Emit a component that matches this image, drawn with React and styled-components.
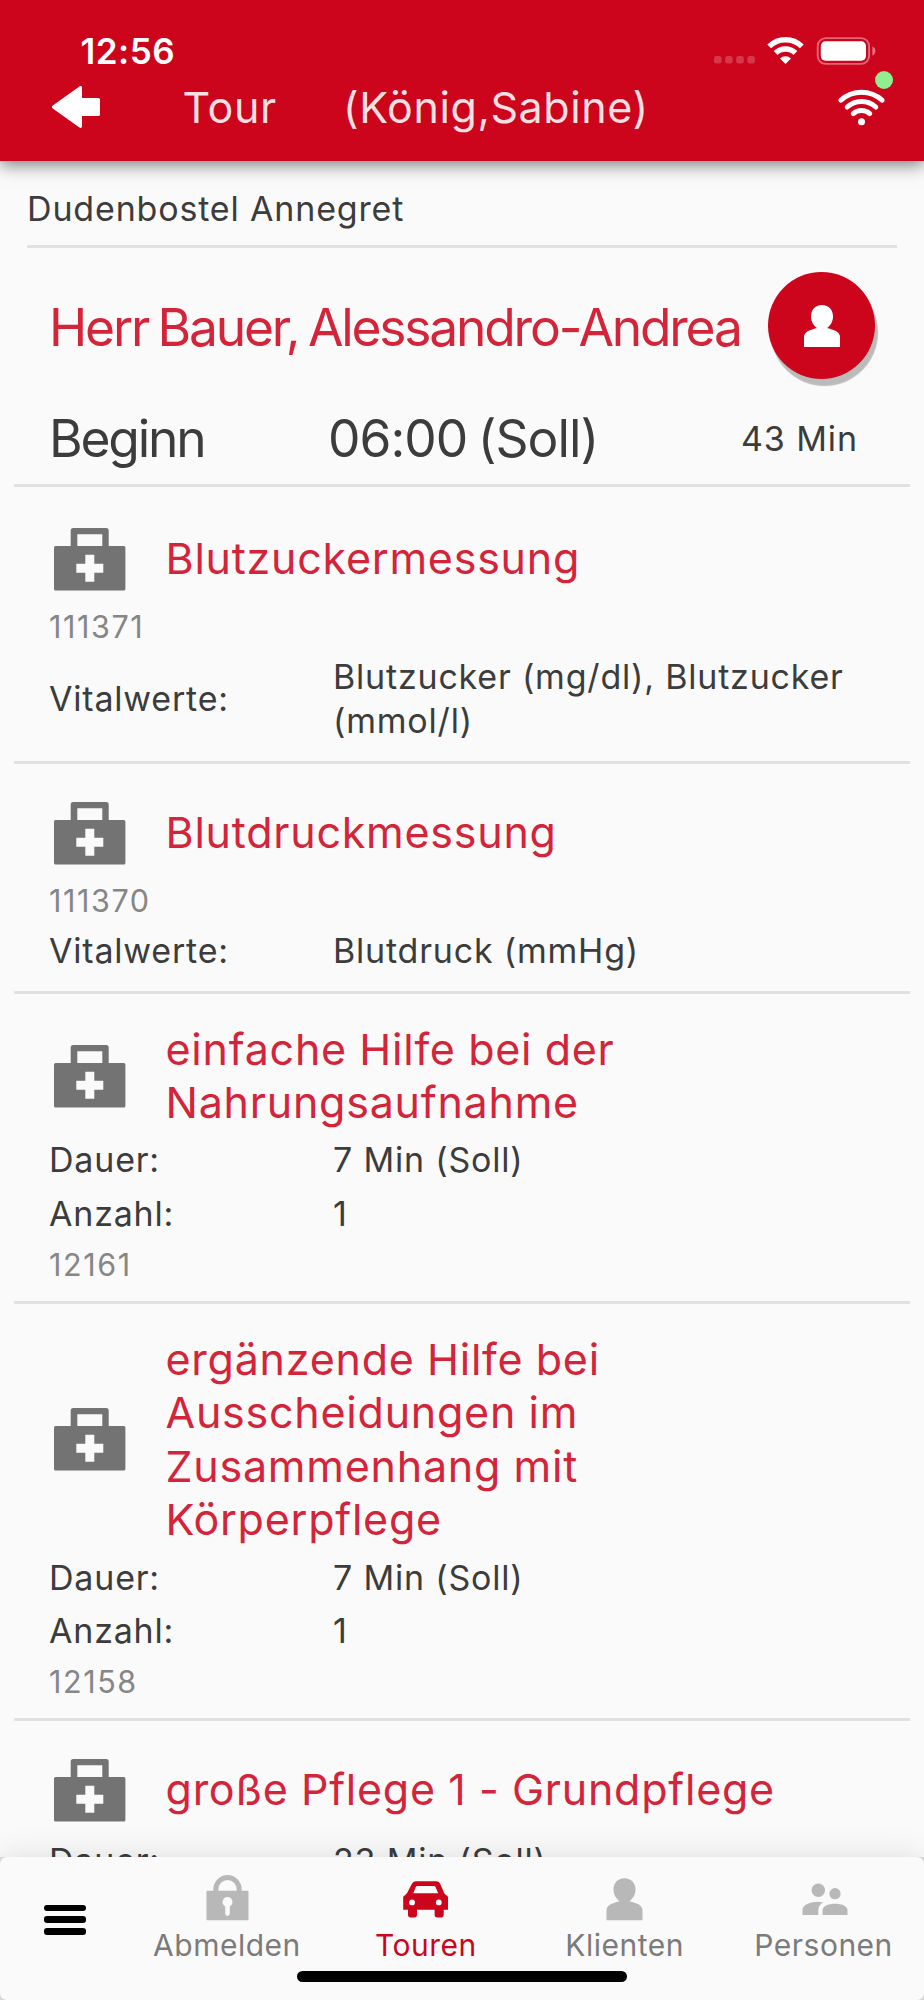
import React from 'react';
import styled, { createGlobalStyle, ThemeProvider } from 'styled-components';

const theme = {
  colors: {
    primary: '#cc051d',
    title: '#d42439',
    background: '#fafafa',
    text: '#3c3c3c',
    muted: '#868686',
    tabLabel: '#7b7b7b',
    tabIcon: '#b8b8b8',
    icon: '#737373',
    divider: '#e1e1e1',
    online: '#90ee90'
  },
  fontSizes: {
    sm: '30px',
    md: '34px',
    lg: '43px',
    xl: '51.5px'
  }
};

const GlobalStyle = createGlobalStyle`
  * {
    box-sizing: border-box;
  }

  body {
    margin: 0;
    background-color: #dedede;
    font-family: Inter, "Liberation Sans", sans-serif;
  }
`;

const Screen = styled.div`
  display: flex;
  flex-direction: column;
  width: 924px;
  height: 2000px;
  overflow: hidden;
  color: ${({ theme }) => theme.colors.text};
`;

const Header = styled.header`
  position: relative;
  z-index: 1;
  flex: none;
  height: 161px;
  background-color: ${({ theme }) => theme.colors.primary};
  box-shadow: 0 4px 16px rgba(0, 0, 0, 0.5);
  color: #fff;
`;

const StatusBar = styled.div`
  display: flex;
  align-items: center;
  height: 77px;
  padding: 24px 48px 0 80.5px;
`;

const Clock = styled.span`
  flex: 1;
  font-size: 35px;
  font-weight: 600;
  letter-spacing: 0.5px;
  line-height: 42px;
`;

const StatusIcons = styled.div`
  display: flex;
  align-items: center;
  gap: 12px;

  svg {
    display: block;
  }
`;

const AppBar = styled.div`
  display: grid;
  grid-template-columns: 130.5px 160.5px 1fr 48px;
  align-items: center;
  height: 59px;
  padding: 0 38.5px 0 52px;

  svg {
    display: block;
  }
`;

const BarTitle = styled.span`
  color: rgba(255, 255, 255, 0.88);
  font-size: ${({ theme }) => theme.fontSizes.lg};
  letter-spacing: 0.6px;
  line-height: 54px;
  white-space: nowrap;
`;

const Connection = styled.div`
  position: relative;
  width: 47px;
  margin-top: 2px;
`;

const OnlineBadge = styled.span`
  position: absolute;
  top: -18px;
  right: -8px;
  width: 18px;
  height: 18px;
  border-radius: 50%;
  background-color: ${({ theme }) => theme.colors.online};
`;

const Content = styled.main`
  flex: 1;
  min-height: 0;
  overflow: hidden;
  background-color: ${({ theme }) => theme.colors.background};
`;

const Caregiver = styled.div`
  height: 87px;
  margin: 0 27px;
  padding-top: 26px;
  border-bottom: 3px solid ${({ theme }) => theme.colors.divider};
  font-size: ${({ theme }) => theme.fontSizes.md};
  letter-spacing: 0.84px;
  line-height: 44px;
`;

const Client = styled.section`
  height: 239px;
  margin: 0 14px;
  padding: 24px 35px 0;
  border-bottom: 3px solid ${({ theme }) => theme.colors.divider};
`;

const ClientRow = styled.div`
  display: flex;
  align-items: center;
  justify-content: space-between;
  height: 107px;
`;

const ClientName = styled.h1`
  margin: 3px 0 0;
  color: ${({ theme }) => theme.colors.title};
  font-size: ${({ theme }) => theme.fontSizes.xl};
  font-weight: 400;
  letter-spacing: -2.2px;
  word-spacing: -2.8px;
  white-space: nowrap;
`;

const Avatar = styled.button`
  display: flex;
  flex: none;
  align-items: center;
  justify-content: center;
  width: 107px;
  height: 107px;
  padding: 0;
  border: 0;
  border-radius: 50%;
  background-color: ${({ theme }) => theme.colors.primary};
  box-shadow: 3px 7px 1px rgba(0, 0, 0, 0.25);
  color: #fff;
`;

const StartRow = styled.div`
  display: grid;
  grid-template-columns: 279px 413px 1fr;
  align-items: center;
  height: 90px;
  margin-top: 14px;
  white-space: nowrap;
`;

const StartText = styled.span`
  font-size: ${({ theme }) => theme.fontSizes.xl};
  letter-spacing: ${({ $tight }) => ($tight ? '-2.2px' : '-1px')};
  word-spacing: -3px;
`;

const Duration = styled.span`
  font-size: ${({ theme }) => theme.fontSizes.md};
  letter-spacing: 0.9px;
`;

const ServiceList = styled.div`
  padding-top: 3px;
`;

const Service = styled.article`
  margin: 0 14px;
  padding: 29px 35px 13px;
  border-bottom: 3px solid ${({ theme }) => theme.colors.divider};
`;

const ServiceHead = styled.div`
  display: grid;
  grid-template-columns: 112px 640px;
  align-items: center;
  min-height: 80px;
  margin-bottom: 4px;
  padding-left: 4.5px;

  svg {
    display: block;
  }
`;

const ServiceTitle = styled.h2`
  margin: 0;
  color: ${({ theme }) => theme.colors.title};
  font-size: ${({ theme }) => theme.fontSizes.lg};
  font-weight: 400;
  letter-spacing: 0.76px;
  word-spacing: -0.4px;
  line-height: 53.6px;
`;

const ServiceRow = styled.div`
  display: grid;
  grid-template-columns: 284px 1fr;
  align-items: center;
  padding: 4.5px 0;
  font-size: ${({ theme }) => theme.fontSizes.md};
  letter-spacing: 0.8px;
  line-height: 44.5px;
`;

const ServiceNumber = styled.div`
  padding: 4px 0 3px;
  color: ${({ theme }) => theme.colors.muted};
  font-size: 30.5px;
  letter-spacing: 1.6px;
  line-height: 40px;
`;

const TabBar = styled.nav`
  position: relative;
  z-index: 1;
  display: flex;
  flex: none;
  height: 143px;
  padding-right: 1px;
  border-radius: 7px;
  background-color: ${({ theme }) => theme.colors.background};
  box-shadow: 0 0 32px rgba(0, 0, 0, 0.12);
`;

const MenuButton = styled.button`
  display: flex;
  flex: none;
  flex-direction: column;
  gap: 5.5px;
  width: 127.5px;
  padding: 47.5px 0 0 44px;
  border: 0;
  background: none;
`;

const MenuLine = styled.span`
  width: 42px;
  height: 6.4px;
  border-radius: 3px;
  background-color: #000;
`;

const Tab = styled.a`
  display: flex;
  flex: 1;
  flex-direction: column;
  align-items: center;
  gap: 4px;
  padding-top: 18px;
  color: ${({ theme, $active }) => ($active ? theme.colors.primary : theme.colors.tabIcon)};
`;

const TabLabel = styled.span`
  color: ${({ theme, $active }) => ($active ? theme.colors.primary : theme.colors.tabLabel)};
  font-size: ${({ theme }) => theme.fontSizes.sm};
  letter-spacing: 0.5px;
  line-height: 36px;
`;

const HomeIndicator = styled.div`
  position: absolute;
  bottom: 18px;
  left: 297px;
  width: 330px;
  height: 11px;
  border-radius: 6px;
  background-color: #000;
`;

const SignalIcon = () => (
  <svg width="41" height="28" viewBox="0 0 41 28" fill="#fff" fillOpacity="0.2">
    {[0, 11.1, 22.2, 33.3].map((x) => (
      <rect key={x} x={x} y="19" width="7.6" height="7.6" rx="2.4" />
    ))}
  </svg>
);

const StatusWifiIcon = () => (
  <svg width="37" height="28" viewBox="0 0 37 28" fill="none" stroke="#fff" strokeWidth="5.4">
    <path d="M2.2 9.4a23.3 23.3 0 0 1 32.6 0" />
    <path d="M8.6 16a14.2 14.2 0 0 1 19.8 0" />
    <path d="M18.5 27l-5.5-5.6a7.8 7.8 0 0 1 11 0z" fill="#fff" stroke="none" />
  </svg>
);

const BatteryIcon = () => (
  <svg width="60" height="28" viewBox="0 0 60 28">
    <rect x="1.7" y="1.1" width="51.4" height="25.8" rx="8" fill="none" stroke="#fff" strokeOpacity="0.4" strokeWidth="1.9" />
    <rect x="4.8" y="4.3" width="45.2" height="19.4" rx="4.6" fill="#fff" />
    <path d="M56.4 9.4c4 1.2 4 8 0 9.2z" fill="#fff" fillOpacity="0.45" />
  </svg>
);

const BackIcon = () => (
  <svg width="48" height="42" viewBox="0 0 48 42" fill="#fff">
    <path d="M.8 19.4 27.4.6c1.3-1 2.6-.4 2.6 1.2V12h16.4q1.6 0 1.6 1.6v14.8q0 1.6-1.6 1.6H30v10.2c0 1.6-1.3 2.2-2.6 1.2L.8 22.6c-1.2-.9-1.2-2.3 0-3.2z" />
  </svg>
);

const WifiIcon = () => (
  <svg width="47" height="37" viewBox="0 0 47 37" fill="none" stroke="#fff" strokeWidth="5" strokeLinecap="round">
    <path d="M3 11.2a30.5 30.5 0 0 1 41 0" />
    <path d="M9.2 18a21.2 21.2 0 0 1 28.6 0" />
    <path d="M15.3 24.6a12.3 12.3 0 0 1 16.4 0" />
    <circle cx="23.5" cy="32.8" r="3.5" fill="#fff" stroke="none" />
  </svg>
);

const PERSON_PATH =
  'M18 0C25 0 29 5 29 11.4c0 5.2-2.8 9.4-6 11.6C31.5 25 36 27.6 36 32v10H0V32c0-4.4 4.5-7 13-9-3.2-2.2-6-6.4-6-11.6C7 5 11 0 18 0z';

const AvatarIcon = () => (
  <svg width="36" height="42" viewBox="0 0 36 42" fill="currentColor">
    <path d={PERSON_PATH} />
  </svg>
);

const MedicalCaseIcon = () => (
  <svg width="72" height="63" viewBox="0 0 72 63">
    <path
      fill={theme.colors.icon}
      fillRule="evenodd"
      d="M16.7 18V2.5q0-2.5 2.5-2.5h33q2.5 0 2.5 2.5V18h15.1q1.6 0 1.6 1.6v41.3q0 1.6-1.6 1.6H1.6q-1.6 0-1.6-1.6V19.6Q0 18 1.6 18zM23.3 6.3V18h25V6.3zM31.3 26.7v9h-9v9h9v9h9v-9h9v-9h-9v-9z"
    />
  </svg>
);

const LockIcon = () => (
  <svg width="48" height="48" viewBox="0 0 48 48" fill="currentColor">
    <path d="M12.8 17v-2.5a11.7 12 0 0 1 23.4 0V17" fill="none" stroke="currentColor" strokeWidth="5" />
    <path
      fillRule="evenodd"
      d="M4.5 15.7h40q1 0 1 1v27.5q0 1-1 1h-40q-1 0-1-1V16.7q0-1 1-1zM24.5 22a5 5 0 0 0-2.3 9.4v7.2a2.3 2.3 0 0 0 4.6 0v-7.2A5 5 0 0 0 24.5 22z"
    />
  </svg>
);

const CarIcon = () => (
  <svg width="48" height="48" viewBox="0 0 48 48" fill="currentColor">
    <path
      fillRule="evenodd"
      d="M14 6.3h20.2q3 0 4.2 2.9l4 9.3 3.6 3.2v13.1h-4.3v5q0 2.7-2.7 2.7h-3.7q-2.7 0-2.7-2.7v-5H15v5q0 2.7-2.7 2.7H8.6q-2.6 0-2.6-2.7v-5H1.2V21.7l3.6-3.2 4.9-9.3Q11 6.3 14 6.3zM15.6 11q-1.4 0-1.9 1.3l-2.4 6h24.8l-2.4-6q-.5-1.3-1.9-1.3zM10.1 24.5a2.9 2.9 0 1 0 0 5.8 2.9 2.9 0 0 0 0-5.8zM36.8 24.5a2.9 2.9 0 1 0 0 5.8 2.9 2.9 0 0 0 0-5.8z"
    />
  </svg>
);

const PersonIcon = () => (
  <svg width="48" height="48" viewBox="0 0 48 48" fill="currentColor">
    <path transform="translate(5.5 3.2)" d={PERSON_PATH} />
  </svg>
);

const PeopleIcon = () => (
  <svg width="48" height="48" viewBox="0 0 48 48" fill="currentColor">
    <circle cx="18.3" cy="15.3" r="6.7" />
    <circle cx="35" cy="18.7" r="5.6" />
    <path d="M2.5 40v-5.2c0-5 8-8.1 15.5-8.1 2 0 3.7.2 5.3.5-3.3 2-5 4.5-5 8V40z" />
    <path d="M22.6 40v-4.8c0-4.5 6.5-6.5 12.5-6.5s12.4 2 12.4 6.5V40z" />
  </svg>
);

const services = [
  {
    title: 'Blutzuckermessung',
    number: '111371',
    vitals: 'Blutzucker (mg/dl), Blutzucker (mmol/l)'
  },
  {
    title: 'Blutdruckmessung',
    number: '111370',
    vitals: 'Blutdruck (mmHg)'
  },
  {
    title: 'einfache Hilfe bei der Nahrungsaufnahme',
    number: '12161',
    duration: '7 Min (Soll)',
    count: 1
  },
  {
    title: 'ergänzende Hilfe bei Ausscheidungen im Zusammenhang mit Körperpflege',
    number: '12158',
    duration: '7 Min (Soll)',
    count: 1
  },
  {
    title: 'große Pflege 1 - Grundpflege',
    duration: '23 Min (Soll)'
  }
];

const tabs = [
  { label: 'Abmelden', Icon: LockIcon },
  { label: 'Touren', Icon: CarIcon, active: true },
  { label: 'Klienten', Icon: PersonIcon },
  { label: 'Personen', Icon: PeopleIcon }
];

const ServiceItem = ({ service }) => (
  <Service>
    <ServiceHead>
      <MedicalCaseIcon />
      <ServiceTitle>{service.title}</ServiceTitle>
    </ServiceHead>

    {service.duration && (
      <ServiceRow>
        <span>Dauer:</span>
        <span>{service.duration}</span>
      </ServiceRow>
    )}
    {service.count && (
      <ServiceRow>
        <span>Anzahl:</span>
        <span>{service.count}</span>
      </ServiceRow>
    )}
    {service.number && <ServiceNumber>{service.number}</ServiceNumber>}
    {service.vitals && (
      <ServiceRow>
        <span>Vitalwerte:</span>
        <span>{service.vitals}</span>
      </ServiceRow>
    )}
  </Service>
);

const App = () => {
  return (
    <ThemeProvider theme={theme}>
      <GlobalStyle />
      <Screen>
        <Header>
          <StatusBar>
            <Clock>12:56</Clock>
            <StatusIcons>
              <SignalIcon />
              <StatusWifiIcon />
              <BatteryIcon />
            </StatusIcons>
          </StatusBar>
          <AppBar>
            <BackIcon />
            <BarTitle>Tour</BarTitle>
            <BarTitle>(König,Sabine)</BarTitle>
            <Connection>
              <WifiIcon />
              <OnlineBadge />
            </Connection>
          </AppBar>
        </Header>

        <Content>
          <Caregiver>Dudenbostel Annegret</Caregiver>

          <Client>
            <ClientRow>
              <ClientName>Herr Bauer, Alessandro-Andrea</ClientName>
              <Avatar type="button" aria-label="Klient">
                <AvatarIcon />
              </Avatar>
            </ClientRow>
            <StartRow>
              <StartText $tight>Beginn</StartText>
              <StartText>06:00 (Soll)</StartText>
              <Duration>43 Min</Duration>
            </StartRow>
          </Client>

          <ServiceList>
            {services.map((service) => (
              <ServiceItem key={service.title} service={service} />
            ))}
          </ServiceList>
        </Content>

        <TabBar>
          <MenuButton type="button" aria-label="Menü">
            <MenuLine />
            <MenuLine />
            <MenuLine />
          </MenuButton>
          {tabs.map(({ label, Icon, active }) => (
            <Tab key={label} $active={active}>
              <Icon />
              <TabLabel $active={active}>{label}</TabLabel>
            </Tab>
          ))}
          <HomeIndicator />
        </TabBar>
      </Screen>
    </ThemeProvider>
  );
};

export default App;
